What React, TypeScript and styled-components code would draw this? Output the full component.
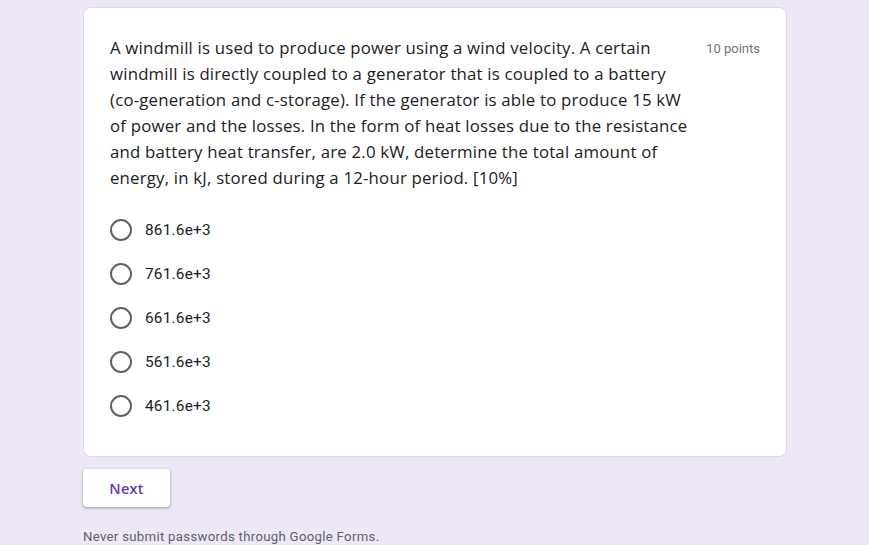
import React from 'react';
import styled, { createGlobalStyle } from 'styled-components';

const GlobalStyle = createGlobalStyle`
  html, body {
    margin: 0;
    padding: 0;
    background: #ede7f6;
  }
  body {
    font-family: Roboto, "Liberation Sans", sans-serif;
  }
`;

const Page = styled.div`
  width: 704px;
  margin-left: 83px;
  padding-top: 7px;
  display: flex;
  flex-direction: column;
`;

const Card = styled.div`
  background: #fff;
  border: 1px solid #dadce0;
  border-radius: 8px;
  padding: 27px 26px 28px 26px;
  display: flex;
  flex-direction: column;
`;

const Header = styled.div`
  display: flex;
  align-items: flex-start;
  justify-content: space-between;
`;

const Question = styled.div`
  font-family: "Open Sans", sans-serif;
  font-size: 16.8px;
  line-height: 26px;
  color: #202124;
  letter-spacing: 0.2px;
  white-space: nowrap;
`;

const Points = styled.div`
  font-family: Roboto, sans-serif;
  font-size: 13px;
  line-height: 26px;
  color: #70757a;
  padding-top: 1px;
  white-space: nowrap;
`;

const Options = styled.div`
  display: flex;
  flex-direction: column;
  margin-top: 17px;
`;

const Option = styled.label`
  display: flex;
  align-items: center;
  height: 44px;
  gap: 13px;
  cursor: pointer;
`;

const Radio = styled.span`
  width: 22px;
  height: 22px;
  box-sizing: border-box;
  border: 2px solid #5f6368;
  border-radius: 50%;
  flex: none;
`;

const OptionText = styled.span`
  font-family: Roboto, sans-serif;
  font-size: 15.4px;
  color: #202124;
  letter-spacing: 0.2px;
`;

const Actions = styled.div`
  margin-top: 12px;
`;

const NextButton = styled.button`
  width: 87px;
  height: 38px;
  background: #fff;
  border: none;
  border-radius: 4px;
  box-shadow: 0 1px 2px 0 rgba(60, 64, 67, 0.3), 0 1px 3px 1px rgba(60, 64, 67, 0.15);
  font-family: "Open Sans", sans-serif;
  font-weight: 600;
  font-size: 14.5px;
  letter-spacing: 0.25px;
  color: #673ab7;
`;

const Footnote = styled.div`
  margin-top: 22px;
  font-family: Roboto, sans-serif;
  font-size: 13.2px;
  letter-spacing: 0.3px;
  color: #5f6368;
`;

const questionLines = [
  'A windmill is used to produce power using a wind velocity. A certain',
  'windmill is directly coupled to a generator that is coupled to a battery',
  '(co-generation and c-storage). If the generator is able to produce 15 kW',
  'of power and the losses. In the form of heat losses due to the resistance',
  'and battery heat transfer, are 2.0 kW, determine the total amount of',
  'energy, in kJ, stored during a 12-hour period. [10%]',
];

const answers = ['861.6e+3', '761.6e+3', '661.6e+3', '561.6e+3', '461.6e+3'];

const App = () => {
  return (
    <>
      <GlobalStyle />
      <Page>
        <Card>
          <Header>
            <Question>
              {questionLines.map((line, i) => (
                <React.Fragment key={i}>
                  {line}
                  {i < questionLines.length - 1 && <br />}
                </React.Fragment>
              ))}
            </Question>
            <Points>10 points</Points>
          </Header>
          <Options>
            {answers.map((a) => (
              <Option key={a}>
                <Radio />
                <OptionText>{a}</OptionText>
              </Option>
            ))}
          </Options>
        </Card>
        <Actions>
          <NextButton>Next</NextButton>
        </Actions>
        <Footnote>Never submit passwords through Google Forms.</Footnote>
      </Page>
    </>
  );
};

export default App;
